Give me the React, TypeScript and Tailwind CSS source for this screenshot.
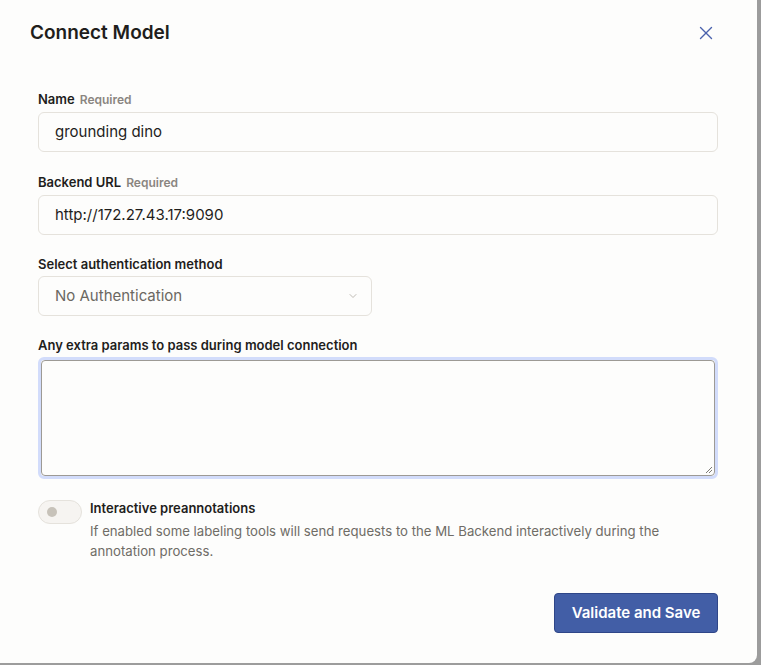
import { X, ChevronDown } from "lucide-react";

const font = { fontFamily: "Inter, 'Noto Sans', sans-serif" };

function Label({ text, required }: { text: string; required?: boolean }) {
  return (
    <div className="mb-[4px] flex items-baseline gap-[5px] text-[13px] leading-[16px]">
      <span className="font-semibold text-[#1f1e1c]">{text}</span>
      {required && <span className="text-[12px] font-semibold text-[#8a8580]">Required</span>}
    </div>
  );
}

export default function App() {
  return (
    <div className="h-[665px] w-[761px] bg-[#9c9c9c]" style={font}>
      <div className="flex h-[663px] w-[757px] flex-col rounded-br-[8px] bg-[#fdfdfc]">
        {/* header */}
        <div className="flex h-[64px] items-center justify-between pl-[30px] pr-[40px] pt-[2px]">
          <h1 className="text-[19px] font-semibold text-[#1f1e1c]">Connect Model</h1>
          <X size={22} strokeWidth={1.5} className="text-[#4a62ad]" />
        </div>

        <div className="flex flex-col pl-[38px] pr-[39px] pt-[27px]">
          <Label text="Name" required />
          <div className="flex h-[40px] items-center rounded-[6px] border border-[#e5e2dc] bg-[#fdfdfc] px-[16px] text-[15px] text-[#1f1e1c]">
            grounding dino
          </div>

          <div className="mt-[22px]">
            <Label text="Backend URL" required />
            <div className="flex h-[40px] items-center rounded-[6px] border border-[#e5e2dc] bg-[#fdfdfc] px-[16px] text-[15px] text-[#1f1e1c]">
              http://172.27.43.17:9090
            </div>
          </div>

          <div className="mt-[21px]">
            <Label text="Select authentication method" />
            <div className="flex h-[40px] w-[334px] items-center justify-between rounded-[6px] border border-[#e5e2dc] bg-[#fdfdfc] pl-[16px] pr-[12px] text-[15px] text-[#6b6862]">
              No Authentication
              <ChevronDown size={12} strokeWidth={1.5} className="text-[#a9a49c]" />
            </div>
          </div>

          <div className="mt-[21px]">
            <Label text="Any extra params to pass during model connection" />
            <div className="h-[122px] rounded-[6px] border-[3px] border-[#d2dcfb] bg-[#fdfdfc]">
              <div className="relative h-full rounded-[4px] border border-[#9d9a95]">
                <svg className="absolute bottom-[1px] right-[1px]" width="9" height="9" viewBox="0 0 9 9">
                  <path d="M8 2L2 8M8 5L5 8" stroke="#7d7a75" strokeWidth="1" />
                </svg>
              </div>
            </div>
          </div>

          <div className="mt-[21px] flex gap-[8px]">
            <div className="flex h-[24px] w-[44px] shrink-0 items-center rounded-full border border-[#e5e2dc] bg-[#f6f4f1] pl-[8px]">
              <div className="h-[10px] w-[10px] rounded-full bg-[#c7c2b9]" />
            </div>
            <div className="flex flex-col">
              <span className="text-[13px] font-semibold leading-[17px] text-[#1f1e1c]">Interactive preannotations</span>
              <p className="mt-[4px] text-[13.2px] leading-[20px] text-[#6f6c66]">
                If enabled some labeling tools will send requests to the ML Backend interactively during the annotation process.
              </p>
            </div>
          </div>

          <div className="mt-[32px] flex justify-end">
            <button className="h-[40px] w-[164px] rounded-[4px] border border-[#2f4688] bg-[#425ea6] text-[15px] font-semibold text-white">
              Validate and Save
            </button>
          </div>
        </div>
      </div>
    </div>
  );
}
